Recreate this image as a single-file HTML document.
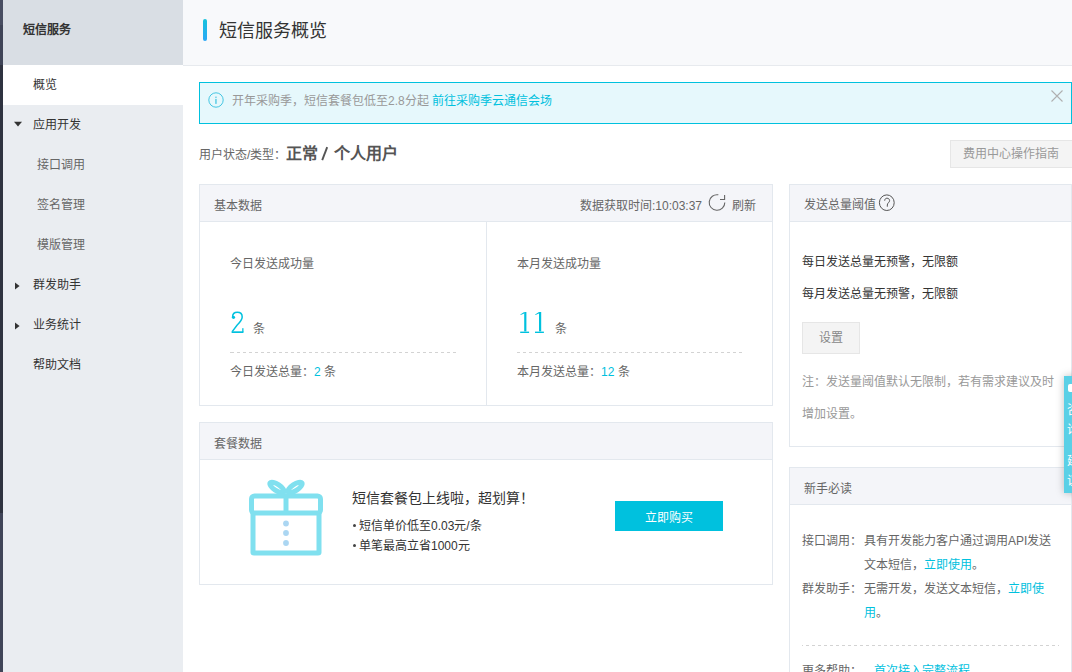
<!DOCTYPE html>
<html lang="zh-CN">
<head>
<meta charset="utf-8">
<style>
*{box-sizing:border-box;margin:0;padding:0}
html,body{width:1072px;height:672px;overflow:hidden;background:#fff;font-family:"Liberation Sans",sans-serif;font-size:12px;color:#333}
.a{position:absolute;white-space:nowrap}
.t{line-height:20px;height:20px}
#strip1{left:0;top:0;width:3px;height:672px;background:linear-gradient(#484d61 0 25px,#3f4457 25px 65px,#2f3340 65px 513px,#404558 513px)}
#strip2{left:0;top:513px;width:3px;height:159px;background:#404558}
#side{left:3px;top:0;width:180px;height:672px;background:#eaedf1}
#sidehead{left:3px;top:0;width:180px;height:65px;background:#d9dee4}
#sideact{left:3px;top:65px;width:180px;height:40px;background:#fff}
.tri-d{width:0;height:0;border-left:4px solid transparent;border-right:4px solid transparent;border-top:5px solid #333}
.tri-r{width:0;height:0;border-top:3.5px solid transparent;border-bottom:3.5px solid transparent;border-left:5px solid #333}
#mainhead{left:183px;top:0;width:889px;height:66px;background:#f8f9fb;border-bottom:1px solid #e7eaee}
#bar{left:203px;top:19px;width:4px;height:22px;border-radius:2px;background:linear-gradient(#17c3dc,#2ba7f6)}
#alert{left:199px;top:82px;width:873px;height:42px;background:#e6f8fc;border:1px solid #00c1de}
.cyan{color:#00c1de}
.panel{border:1px solid #e3e8ee;background:#fff}
.ph{background:#f4f5f9;border-bottom:1px solid #e3e8ee}
.btn-g{background:#f4f4f4;border:1px solid #e6e6e6;color:#999}
.dash{height:1px;background:repeating-linear-gradient(90deg,#d5d5d5 0 3px,transparent 3px 6px)}
</style>
</head>
<body>
<div class="a" id="strip1"></div>

<div class="a" id="side"></div>
<div class="a" id="sidehead"></div>
<div class="a" id="sideact"></div>
<div class="a t" style="left:23px;top:20px;font-weight:bold;color:#333">短信服务</div>
<div class="a t" style="left:33px;top:75px;color:#333">概览</div>
<svg class="a" style="left:0;top:0" width="30" height="340"><polygon points="14,121.8 22,121.8 18,126.6" fill="#333"/><polygon points="15,282.6 19.6,286.1 15,289.6" fill="#333"/><polygon points="15,322.6 19.6,326.1 15,329.6" fill="#333"/></svg>
<div class="a t" style="left:33px;top:115px;color:#333">应用开发</div>
<div class="a t" style="left:37px;top:155px;color:#666">接口调用</div>
<div class="a t" style="left:37px;top:195px;color:#666">签名管理</div>
<div class="a t" style="left:37px;top:235px;color:#666">模版管理</div>

<div class="a t" style="left:33px;top:275px;color:#333">群发助手</div>

<div class="a t" style="left:33px;top:315px;color:#333">业务统计</div>
<div class="a t" style="left:33px;top:355px;color:#333">帮助文档</div>

<div class="a" id="mainhead"></div>
<div class="a" id="bar"></div>
<div class="a" style="left:219px;top:20px;font-size:18px;line-height:22px;color:#333">短信服务概览</div>

<div class="a" id="alert"></div>
<svg class="a" style="left:208px;top:92px" width="16" height="16" viewBox="0 0 16 16"><circle cx="8" cy="8" r="7.2" fill="none" stroke="#45c6e2" stroke-width="1"/><rect x="7.3" y="6.9" width="1.3" height="5" fill="#45c6e2"/><rect x="7.3" y="4.6" width="1.3" height="1.3" fill="#45c6e2"/></svg>
<div class="a t" style="left:232px;top:91px;color:#999">开年采购季，短信套餐包低至2.8分起 <span class="cyan">前往采购季云通信会场</span></div>
<svg class="a" style="left:1051px;top:90px" width="12" height="12" viewBox="0 0 12 12"><path d="M0.5 0.5L11.5 11.5M11.5 0.5L0.5 11.5" stroke="#b0b0b0" stroke-width="1.1"/></svg>

<div class="a t" style="left:199px;top:145px;color:#666">用户状态/类型：</div>
<div class="a" style="left:286px;top:143px;font-size:16px;line-height:22px;font-weight:700;color:#555">正常</div>
<svg class="a" style="left:318px;top:144px" width="12" height="18"><path d="M4.2 16.2L9.2 3.2" stroke="#555" stroke-width="1.9"/></svg>
<div class="a" style="left:334px;top:143px;font-size:16px;line-height:22px;font-weight:700;color:#555">个人用户</div>
<div class="a btn-g" style="left:950px;top:140px;width:124px;height:28px"></div>
<div class="a t" style="left:963px;top:144px;color:#999">费用中心操作指南</div>

<!-- basic data panel -->
<div class="a panel" style="left:199px;top:184px;width:574px;height:222px"></div>
<div class="a ph" style="left:200px;top:185px;width:572px;height:37px"></div>
<div class="a t" style="left:214px;top:196px;color:#666">基本数据</div>
<div class="a t" style="left:580px;top:196px;color:#666">数据获取时间:10:03:37</div>
<svg class="a" style="left:708px;top:193px" width="20" height="20" viewBox="0 0 20 20"><path d="M10.35 1.82A7.8 7.8 0 1 0 16.8 9.5" fill="none" stroke="#666" stroke-width="1.1"/><path d="M12 6.5H16.6V2" fill="none" stroke="#666" stroke-width="1.1"/></svg>
<div class="a t" style="left:732px;top:196px;color:#666">刷新</div>
<div class="a" style="left:486px;top:222px;width:1px;height:183px;background:#e3e8ee"></div>
<div class="a t" style="left:230px;top:254px;color:#666">今日发送成功量</div>
<svg class="a" style="left:230px;top:310px" width="16" height="25" viewBox="0 0 16 25"><g fill="#00c1de"><circle cx="3.5" cy="7.3" r="1.6"/><rect x="1.6" y="21.3" width="11.8" height="1.7"/><rect x="12.2" y="18.2" width="1.3" height="4"/></g><path d="M2.6 7C2.6 3.8 4.8 2.3 7.3 2.3C10.3 2.3 12.2 4.3 12.2 7C12.2 10 10 12.3 7 15.3L2.2 21.6" fill="none" stroke="#00c1de" stroke-width="1.5"/></svg>
<div class="a t" style="left:253px;top:319px;color:#666">条</div>
<div class="a" style="left:230px;top:352px;width:226px;height:1px;background:linear-gradient(90deg,#d3d3d3 0 4px,transparent 4px) no-repeat,repeating-linear-gradient(90deg,transparent 0 1px,#d3d3d3 1px 4px,transparent 4px 6px)"></div>
<div class="a t" style="left:230px;top:362px;color:#666">今日发送总量：<span class="cyan">2</span> 条</div>
<div class="a t" style="left:517px;top:254px;color:#666">本月发送成功量</div>
<svg class="a" style="left:517px;top:310px" width="30" height="25" viewBox="0 0 30 25"><path d="M3 4.3L8 2H9V21.3" fill="none" stroke="#00c1de" stroke-width="0"/><polygon points="7.2,2 9.4,2 9.4,21.4 7.2,21.4" fill="#00c1de"/><polygon points="3.3,4.6 7.2,2 7.2,3.4 3.6,5" fill="#00c1de"/><rect x="3.2" y="21.6" width="8.9" height="1.4" fill="#00c1de"/><path d="M17.8 4.3L22.8 2H23.8V21.3" fill="none" stroke="#00c1de" stroke-width="0"/><polygon points="22.0,2 24.200000000000003,2 24.200000000000003,21.4 22.0,21.4" fill="#00c1de"/><polygon points="18.1,4.6 22.0,2 22.0,3.4 18.400000000000002,5" fill="#00c1de"/><rect x="18.0" y="21.6" width="8.9" height="1.4" fill="#00c1de"/></svg>
<div class="a t" style="left:555px;top:319px;color:#666">条</div>
<div class="a" style="left:517px;top:352px;width:225px;height:1px;background:repeating-linear-gradient(90deg,#d3d3d3 0 3px,transparent 3px 6px)"></div>
<div class="a t" style="left:517px;top:362px;color:#666">本月发送总量：<span class="cyan">12</span> 条</div>

<!-- package panel -->
<div class="a panel" style="left:199px;top:422px;width:574px;height:163px"></div>
<div class="a ph" style="left:200px;top:423px;width:572px;height:37px"></div>
<div class="a t" style="left:214px;top:434px;color:#666">套餐数据</div>
<svg class="a" style="left:246px;top:476px" width="80" height="84" viewBox="0 0 80 84">
<g fill="none" stroke="#80e0ef" stroke-width="5" stroke-linejoin="round">
<ellipse cx="31" cy="11.5" rx="8.3" ry="3.2" transform="rotate(33.7 31 11.5)"/>
<ellipse cx="49" cy="11.5" rx="8.3" ry="3.2" transform="rotate(-33.7 49 11.5)"/>
<rect x="5.5" y="20" width="69" height="17" rx="3"/>
<path d="M40 20V37"/>
<path d="M7 37V76.5Q7 77 8 77H72Q73 77 73 76.5V37"/>
</g>
<g fill="#abd6f2"><circle cx="40" cy="47.5" r="2.9"/><circle cx="40" cy="57" r="2.9"/><circle cx="40" cy="67" r="2.9"/></g>
</svg>
<div class="a" style="left:352px;top:488px;font-size:14px;line-height:20px;color:#333">短信套餐包上线啦，超划算！</div>
<div class="a" style="left:352.5px;top:523.5px;width:3px;height:3px;border-radius:50%;background:#444"></div>
<div class="a t" style="left:359px;top:516px;color:#333">短信单价低至0.03元/条</div>
<div class="a" style="left:352.5px;top:543.5px;width:3px;height:3px;border-radius:50%;background:#444"></div>
<div class="a t" style="left:359px;top:536px;color:#333">单笔最高立省1000元</div>
<div class="a" style="left:615px;top:501px;width:108px;height:30px;background:#00c1de"></div>
<div class="a t" style="left:645px;top:508px;color:#fff">立即购买</div>

<!-- threshold panel -->
<div class="a panel" style="left:789px;top:184px;width:283px;height:263px"></div>
<div class="a ph" style="left:790px;top:185px;width:281px;height:37px"></div>
<div class="a t" style="left:804px;top:195px;color:#666">发送总量阈值</div>
<svg class="a" style="left:878px;top:194px" width="18" height="18" viewBox="0 0 18 18"><ellipse cx="8.8" cy="8.7" rx="7.4" ry="7.8" fill="none" stroke="#555" stroke-width="1"/><path d="M6.7 6.7C6.7 5 7.8 4.2 9 4.2C10.3 4.2 11.6 5.1 11.6 6.6C11.6 8.5 9.3 8.9 9.3 11V12.7" fill="none" stroke="#555" stroke-width="1"/></svg>
<div class="a t" style="left:802px;top:252px;color:#333">每日发送总量无预警，无限额</div>
<div class="a t" style="left:802px;top:284px;color:#333">每月发送总量无预警，无限额</div>
<div class="a btn-g" style="left:802px;top:322px;width:58px;height:32px"></div>
<div class="a t" style="left:819px;top:328px;color:#888">设置</div>
<div class="a t" style="left:802px;top:372px;color:#999">注：发送量阈值默认无限制，若有需求建议及时</div>
<div class="a t" style="left:802px;top:404px;color:#999">增加设置。</div>

<!-- newbie panel -->
<div class="a panel" style="left:789px;top:467px;width:283px;height:240px"></div>
<div class="a ph" style="left:790px;top:468px;width:281px;height:37px"></div>
<div class="a t" style="left:804px;top:479px;color:#666">新手必读</div>
<div class="a t" style="left:802px;top:531px;color:#666">接口调用：</div>
<div class="a t" style="left:864px;top:531px;color:#666">具有开发能力客户通过调用API发送</div>
<div class="a t" style="left:864px;top:555px;color:#666">文本短信，<span class="cyan">立即使用</span>。</div>
<div class="a t" style="left:802px;top:579px;color:#666">群发助手：</div>
<div class="a t" style="left:864px;top:579px;color:#666">无需开发，发送文本短信，<span class="cyan">立即使</span></div>
<div class="a t" style="left:864px;top:603px;color:#666"><span class="cyan">用</span>。</div>
<div class="a" style="left:802px;top:645px;width:257px;height:1px;background:repeating-linear-gradient(90deg,#d3d3d3 0 1px,transparent 1px 4px,#d3d3d3 4px 6px)"></div>
<div class="a t" style="left:802px;top:661px;color:#666">更多帮助：</div>
<div class="a t" style="left:874px;top:661px;color:#00c1de">首次接入完整流程</div>

<!-- floating tab -->
<div class="a" style="left:1064px;top:376px;width:30px;height:117px;background:#5ad0e6;box-shadow:0 0 8px rgba(0,0,0,0.25);overflow:hidden">
<div class="a" style="left:4px;top:8px;width:14px;height:8px;border-radius:2px;background:#fff"></div>
<div class="a" style="left:3px;top:24px;width:14px;font-size:12px;line-height:20px;color:#fff;white-space:normal">咨询</div>
<div class="a" style="left:3px;top:75px;width:14px;font-size:12px;line-height:20px;color:#fff;white-space:normal">建议</div>
</div>
</body>
</html>
